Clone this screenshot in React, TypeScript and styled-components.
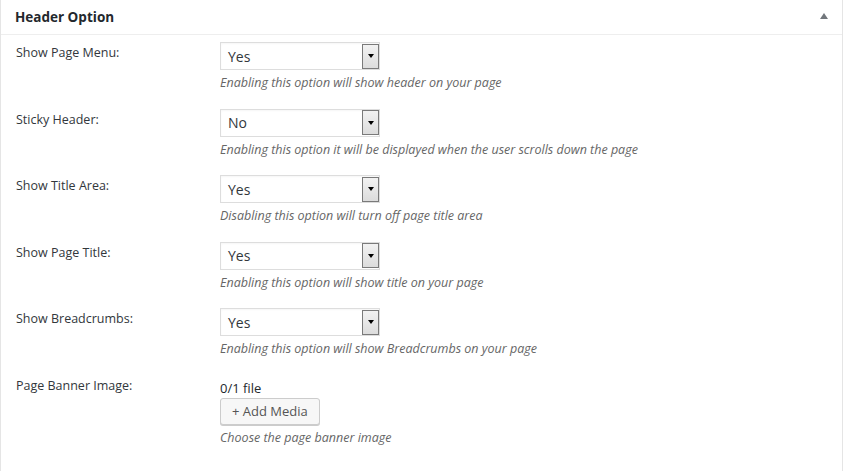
import React from 'react';
import styled, { createGlobalStyle } from 'styled-components';

const GlobalStyle = createGlobalStyle`
  html, body {
    margin: 0;
    padding: 0;
    background: #fff;
  }
  body {
    font-family: 'Open Sans', 'Liberation Sans', sans-serif;
    color: #23282d;
  }
`;

const Panel = styled.div`
  width: 843px;
  height: 471px;
  box-sizing: border-box;
  border-left: 1px solid #e5e5e5;
  border-right: 1px solid #e5e5e5;
  background: #fff;
`;

const PanelHeader = styled.div`
  height: 35px;
  box-sizing: border-box;
  border-bottom: 1px solid #eeeeee;
  display: flex;
  align-items: center;
  justify-content: space-between;
  padding: 0 14px 1px 14px;
`;

const Title = styled.h2`
  margin: 0;
  font-size: 13.5px;
  font-weight: 700;
  color: #23282d;
`;

const Toggle = styled.span`
  width: 0;
  height: 0;
  border-left: 4px solid transparent;
  border-right: 4px solid transparent;
  border-bottom: 6px solid #72777c;
  margin-top: -1px;
`;

const Body = styled.div`
  padding: 0 15px;
`;

const Row = styled.div`
  display: grid;
  grid-template-columns: 204px 1fr;
  padding: 7px 0 9.5px;
`;

const Label = styled.div`
  font-size: 12.5px;
  line-height: 18px;
  padding-top: 2px;
  color: #32373c;
`;

const Field = styled.div`
  display: flex;
  flex-direction: column;
  align-items: flex-start;
`;

const Select = styled.div`
  width: 160px;
  height: 28px;
  box-sizing: border-box;
  border: 1px solid #dddddd;
  box-shadow: inset 0 1px 2px rgba(0, 0, 0, 0.04);
  background: #fff;
  display: flex;
  align-items: center;
  justify-content: space-between;
  padding: 0 0 0 7px;
  font-size: 14px;
  color: #32373c;
`;

const ArrowButton = styled.span`
  width: 17px;
  height: 25px;
  box-sizing: border-box;
  border: 1px solid #7a7a7a;
  background: linear-gradient(#f2f2f2, #dcdcdc);
  display: flex;
  align-items: center;
  justify-content: center;

  &::after {
    content: '';
    width: 0;
    height: 0;
    border-left: 3.5px solid transparent;
    border-right: 3.5px solid transparent;
    border-top: 4px solid #000;
  }
`;

const Hint = styled.p`
  margin: 4px 0 0;
  font-size: 12.5px;
  line-height: 18px;
  font-style: italic;
  color: #666;
`;

const FileCount = styled.div`
  font-size: 13px;
  line-height: 16px;
  margin-top: 5px;
  color: #23282d;
`;

const MediaButton = styled.button`
  margin-top: 2px;
  height: 27px;
  padding: 0 11px;
  font-family: inherit;
  font-size: 13px;
  color: #555;
  background: #f7f7f7;
  border: 1px solid #cccccc;
  border-radius: 3px;
  box-shadow: 0 1px 0 #cccccc;
  cursor: pointer;
`;

type Option = { label: string; value: string; hint: string };

const options: Option[] = [
  { label: 'Show Page Menu:', value: 'Yes', hint: 'Enabling this option will show header on your page' },
  { label: 'Sticky Header:', value: 'No', hint: 'Enabling this option it will be displayed when the user scrolls down the page' },
  { label: 'Show Title Area:', value: 'Yes', hint: 'Disabling this option will turn off page title area' },
  { label: 'Show Page Title:', value: 'Yes', hint: 'Enabling this option will show title on your page' },
  { label: 'Show Breadcrumbs:', value: 'Yes', hint: 'Enabling this option will show Breadcrumbs on your page' },
];

function App() {
  return (
    <>
      <GlobalStyle />
      <Panel>
        <PanelHeader>
          <Title>Header Option</Title>
          <Toggle />
        </PanelHeader>
        <Body>
          {options.map((option) => (
            <Row key={option.label}>
              <Label>{option.label}</Label>
              <Field>
                <Select>
                  <span>{option.value}</span>
                  <ArrowButton />
                </Select>
                <Hint>{option.hint}</Hint>
              </Field>
            </Row>
          ))}
          <Row>
            <Label>Page Banner Image:</Label>
            <Field>
              <FileCount>0/1 file</FileCount>
              <MediaButton>+ Add Media</MediaButton>
              <Hint>Choose the page banner image</Hint>
            </Field>
          </Row>
        </Body>
      </Panel>
    </>
  );
}

export default App;
